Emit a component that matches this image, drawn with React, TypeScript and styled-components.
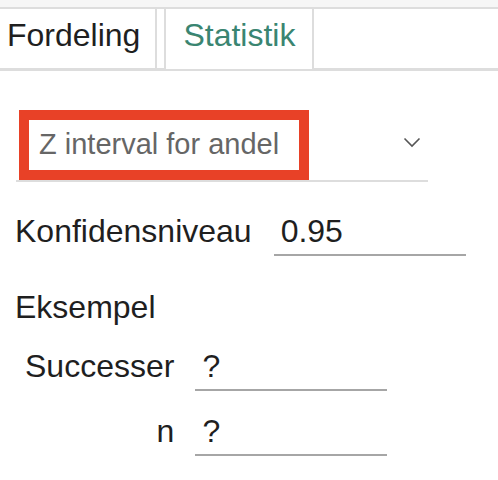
import styled, { createGlobalStyle } from 'styled-components';

const GlobalStyle = createGlobalStyle`
  body {
    margin: 0;
    background: #ffffff;
    font-family: "Liberation Sans", Arial, Helvetica, sans-serif;
    color: #1f1f1f;
  }
`;

const COLORS = {
  TEXT: '#1f1f1f',
  ACTIVE_TAB: '#3a8571',
  MUTED: '#666666',
  LINE: '#dddddd',
  INPUT_LINE: '#a6a6a6',
  HIGHLIGHT: '#e84127',
};

const Page = styled.div`
  width: 100%;
`;

const TopStrip = styled.div`
  height: 7px;
  background: #f6f6f6;
  border-bottom: 2px solid ${COLORS.LINE};
`;

const TabBar = styled.div`
  display: flex;
  align-items: flex-start;
  gap: 7px;
  height: 59px;
  border-bottom: 3px solid ${COLORS.LINE};
`;

const Tab = styled.div<{ $active?: boolean; $first?: boolean }>`
  position: relative;
  box-sizing: border-box;
  height: ${(p) => (p.$active ? '60px' : '59px')};
  padding: 8px ${(p) => (p.$first ? '15px' : '17px')} 0 ${(p) => (p.$first ? '7px' : '17px')};
  font-size: 32px;
  line-height: 36px;
  background: #ffffff;
  color: ${(p) => (p.$active ? COLORS.ACTIVE_TAB : COLORS.TEXT)};
  border-right: 2px solid ${COLORS.LINE};
  border-left: ${(p) => (p.$first ? 'none' : `2px solid ${COLORS.LINE}`)};
`;

const Content = styled.div`
  padding: 0 15px;
`;

const SelectRow = styled.div`
  display: flex;
  align-items: center;
  width: 412px;
  margin: 39px 0 0 1px;
  border-bottom: 2px solid ${COLORS.LINE};
`;

const SelectValue = styled.div`
  box-sizing: border-box;
  width: 290px;
  margin-left: 3px;
  padding: 0 0 2px 10px;
  border: 10px solid ${COLORS.HIGHLIGHT};
  font-size: 29px;
  line-height: 48px;
  color: ${COLORS.MUTED};
  white-space: nowrap;
`;

const Chevron = styled.svg`
  margin: 0 7px 6px auto;
`;

const FieldRow = styled.div`
  display: flex;
  align-items: baseline;
  gap: 22px;
  margin-top: 27px;
`;

const Label = styled.div<{ $align?: 'left' | 'right' }>`
  font-size: 32px;
  line-height: 36px;
  color: ${COLORS.TEXT};
  white-space: nowrap;
  justify-self: ${(p) => (p.$align === 'right' ? 'end' : 'start')};
`;

const TextInput = styled.input`
  box-sizing: border-box;
  width: 192px;
  height: 47px;
  padding: 0 7px;
  border: none;
  border-bottom: 2px solid ${COLORS.INPUT_LINE};
  border-radius: 0;
  outline: none;
  background: transparent;
  font-family: inherit;
  font-size: 32px;
  color: ${COLORS.TEXT};
`;

const SectionTitle = styled.div`
  margin-top: 33px;
  font-size: 32px;
  line-height: 36px;
  color: ${COLORS.TEXT};
`;

const ExampleGrid = styled.div`
  display: grid;
  grid-template-columns: auto 192px;
  column-gap: 21px;
  row-gap: 18px;
  align-items: baseline;
  margin: 19px 0 0 10px;
  width: max-content;
`;

const App = () => {
  return (
    <Page>
      <GlobalStyle />
      <TopStrip />
      <TabBar>
        <Tab $first>Fordeling</Tab>
        <Tab $active>Statistik</Tab>
      </TabBar>
      <Content>
        <SelectRow>
          <SelectValue>Z interval for andel</SelectValue>
          <Chevron width="18" height="11" viewBox="0 0 18 11" fill="none">
            <path d="M1.5 1.5 L9 9 L16.5 1.5" stroke="#555" strokeWidth="1.6" />
          </Chevron>
        </SelectRow>
        <FieldRow>
          <Label>Konfidensniveau</Label>
          <TextInput defaultValue="0.95" />
        </FieldRow>
        <SectionTitle>Eksempel</SectionTitle>
        <ExampleGrid>
          <Label $align="right">Successer</Label>
          <TextInput defaultValue="?" />
          <Label $align="right">n</Label>
          <TextInput defaultValue="?" />
        </ExampleGrid>
      </Content>
    </Page>
  );
};

export default App;
